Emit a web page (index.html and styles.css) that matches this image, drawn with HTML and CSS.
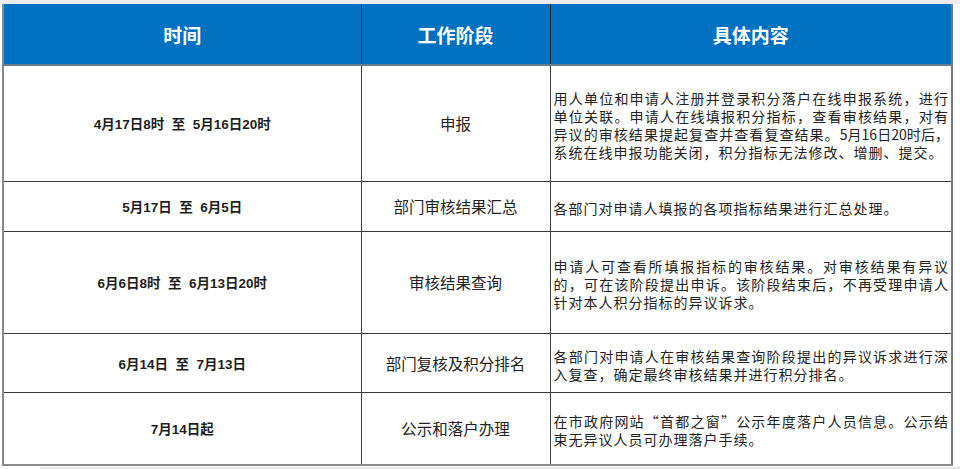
FILE: index.html
```html
<!DOCTYPE html>
<html lang="zh-CN">
<head>
<meta charset="utf-8">
<link rel="stylesheet" href="styles.css">
</head>
<body>
<div class="topbar"></div>
<table class="schedule">
  <colgroup>
    <col class="c1"><col class="c2"><col class="c3">
  </colgroup>
  <thead>
    <tr class="head">
      <th>时间</th><th>工作阶段</th><th>具体内容</th>
    </tr>
  </thead>
  <tbody>
    <tr class="r1">
      <td class="time">4月17日8时&nbsp;&nbsp;至&nbsp;&nbsp;5月16日20时</td>
      <td class="stage">申报</td>
      <td class="desc">用人单位和申请人注册并登录积分落户在线申报系统，进行单位关联。申请人在线填报积分指标，查看审核结果，对有异议的审核结果提起复查并查看复查结果。<span class="tight">5月16日20时后，</span>系统在线申报功能关闭，积分指标无法修改、增删、提交。</td>
    </tr>
    <tr class="r2">
      <td class="time">5月17日&nbsp;&nbsp;至&nbsp;&nbsp;6月5日</td>
      <td class="stage">部门审核结果汇总</td>
      <td class="desc">各部门对申请人填报的各项指标结果进行汇总处理。</td>
    </tr>
    <tr class="r3">
      <td class="time">6月6日8时&nbsp;&nbsp;至&nbsp;&nbsp;6月13日20时</td>
      <td class="stage">审核结果查询</td>
      <td class="desc">申请人可查看所填报指标的审核结果。对审核结果有异议的，可在该阶段提出申诉。该阶段结束后，不再受理申请人针对本人积分指标的异议诉求。</td>
    </tr>
    <tr class="r4">
      <td class="time">6月14日&nbsp;&nbsp;至&nbsp;&nbsp;7月13日</td>
      <td class="stage">部门复核及积分排名</td>
      <td class="desc">各部门对申请人在审核结果查询阶段提出的异议诉求进行深入复查，确定最终审核结果并进行积分排名。</td>
    </tr>
    <tr class="r5">
      <td class="time">7月14日起</td>
      <td class="stage">公示和落户办理</td>
      <td class="desc">在市政府网站“首都之窗”公示年度落户人员信息。公示结束无异议人员可办理落户手续。</td>
    </tr>
  </tbody>
</table>
<div class="bottombar"></div>
</body>
</html>
```

FILE: styles.css
```css
html, body {
  margin: 0;
  padding: 0;
  background: #ffffff;
}
body {
  width: 960px;
  height: 469px;
  overflow: hidden;
  font-family: "Noto Sans CJK SC", "Noto Sans", sans-serif;
  color: #222;
}
.topbar {
  height: 4px;
  background: #ececec;
}
.schedule {
  border-collapse: collapse;
  table-layout: fixed;
  width: 951px;
  margin-left: 2px;
  border-left: 2px solid #8a8a8a;
  border-right: 2px solid #7a7a7a;
  border-bottom: 2px solid #8a8a8a;
}
.c1 { width: 358px; }
.c2 { width: 189px; }
.c3 { width: 402px; }
.head {
  height: 61px;
}
.head th {
  background: #0070c0;
  color: #ffffff;
  font-size: 19px;
  font-weight: bold;
  text-align: center;
  vertical-align: middle;
  padding: 0;
  border-left: 1px solid #2a2a2a;
  border-bottom: 2px solid #6c7c8c;
}
.head th:first-child { border-left: none; }
td {
  border: 1px solid #3c3c3c;
  padding: 0;
  vertical-align: middle;
}
.time {
  text-align: center;
  font-family: "Liberation Sans", "Noto Sans CJK SC", sans-serif;
  font-weight: bold;
  font-size: 13.5px;
  color: #1e1e1e;
}
.stage {
  text-align: center;
  font-size: 15.5px;
  color: #222;
}
.desc {
  font-family: "Noto Sans CJK SC", sans-serif;
  font-size: 14px;
  letter-spacing: 1px;
  line-height: 18px;
  text-align: justify;
  padding: 4px 2px 0 3px;
  color: #222;
}
.tight {
  letter-spacing: 0;
}
.r1 { height: 116px; }
.r2 { height: 50px; }
.r3 { height: 102px; }
.r4 { height: 59px; }
.r5 { height: 73px; }
.bottombar {
  height: 2px;
  margin-left: 40px;
  margin-top: 1px;
  background: #e6e6e6;
}
```
